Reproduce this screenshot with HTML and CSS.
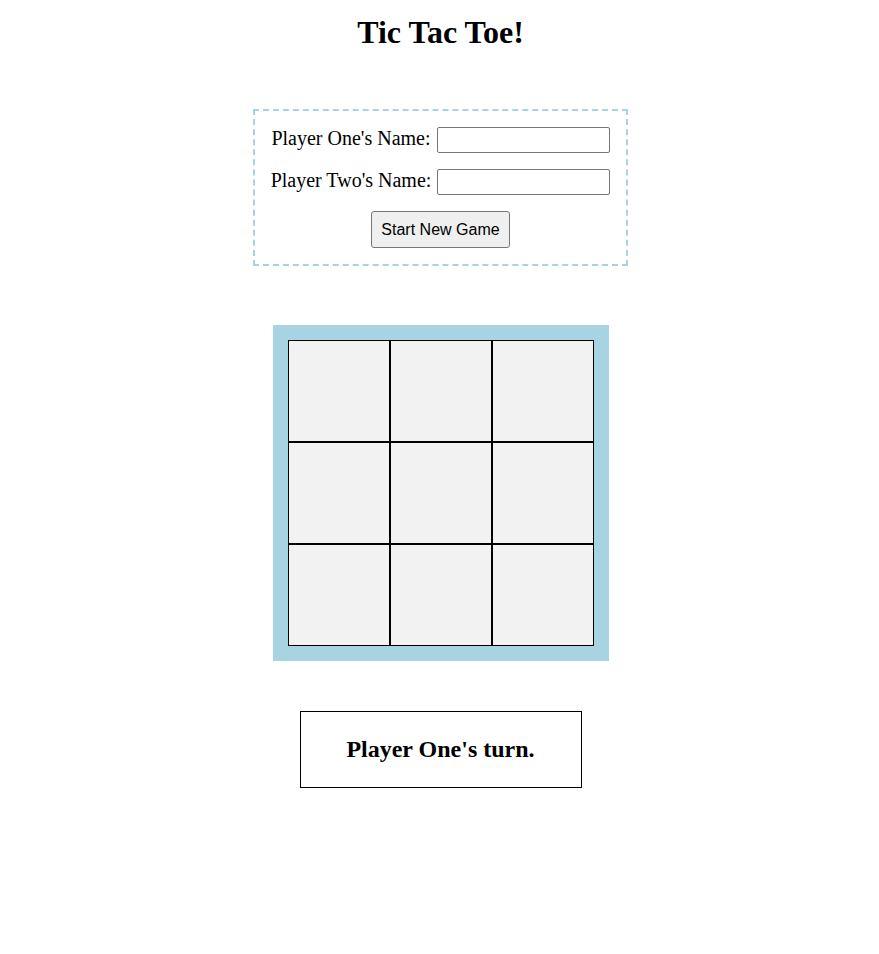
FILE: index.html
```html
<!DOCTYPE html>
<html lang="en">
      <head>
      <meta charset="UTF-8" />
      <meta name="viewport" content="width=device-width, initial-scale=1.0" />
      <title>Tic Tac Toe</title>
      <link rel="stylesheet" href="styles.css">
      </head>
      <body>
      <h1>Tic Tac Toe!</h1>
      <div class="players">
            <div class="player-row">
                  <label for="player-one">Player One's Name:</label>
                  <input type="text" id="player-one" />
            </div>
            <div class="player-row">
                  <label for="player-two">Player Two's Name:</label>
                  <input type="text" id="player-two" />
            </div>
            <button class="start">Start New Game</button>
      </div>
      <div class="board">
            <div class="cell"></div>
            <div class="cell"></div>
            <div class="cell"></div>
            <div class="cell"></div>
            <div class="cell"></div>
            <div class="cell"></div>
            <div class="cell"></div>
            <div class="cell"></div>
            <div class="cell"></div>
      </div>
      <div class="status">
            <h2>Player One's turn.</h2>
      </div>
      </body>
</html>
```
FILE: styles.css
```css
body {
      font-family: "Liberation Serif", "Times New Roman", serif;
      color: #000;
      margin: 0;
      padding: 0 0 0 2px;
      display: flex;
      flex-direction: column;
      align-items: center;
}
h1 {
      font-size: 32px;
      margin: 14px 0 58px;
}
.players {
      border: 2px dashed #a7d3e2;
      padding: 16px;
      display: flex;
      flex-direction: column;
      align-items: center;
      gap: 16px;
}
.player-row {
      display: flex;
      align-items: center;
      gap: 6px;
      height: 26px;
      font-size: 20px;
}
.player-row label {
      line-height: 20px;
      padding-bottom: 4px;
}
.player-row input {
      box-sizing: border-box;
      width: 173px;
      height: 26px;
      margin: 0;
      border: 1px solid #767676;
      border-radius: 2px;
      font-size: 16px;
}
.start {
      font-family: "Liberation Sans", Arial, sans-serif;
      font-size: 16px;
      width: 139px;
      height: 37px;
      background-color: #efefef;
      border: 1px solid #767676;
      border-radius: 3px;
      color: #000;
      padding: 0;
}
.board {
      margin-top: 59px;
      background-color: #a7d3e2;
      padding: 15px;
      display: grid;
      grid-template-columns: repeat(3, auto);
}
.cell {
      width: 100px;
      height: 100px;
      border: 1px solid #000;
      background-color: #f2f2f2;
}
.status {
      margin-top: 50px;
      width: 280px;
      height: 75px;
      border: 1px solid #000;
      display: flex;
      align-items: center;
      justify-content: center;
}
.status h2 {
      font-size: 24px;
      margin: 0;
}
```
